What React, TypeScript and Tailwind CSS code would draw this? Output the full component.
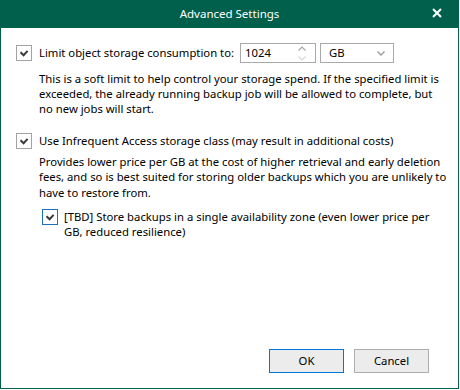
import React from 'react';

const font = { fontFamily: '"Noto Sans", "Open Sans", sans-serif' };

function Check({ focused }: { focused?: boolean }) {
    return (
        <div
            className={`flex h-[16px] w-[16px] shrink-0 items-center justify-center border bg-white ${
                focused ? 'border-[#1c6fb8]' : 'border-[#a3a3a3]'
            }`}
        >
            <svg width="10" height="8" viewBox="0 0 10 8">
                <path d="M1.5 3.2 L4.6 6.2 L8.6 1.8" fill="none" stroke="#3a3a3a" strokeWidth="2" />
            </svg>
        </div>
    );
}

export default function App() {
    return (
        <div className="h-[390px] w-[460px] bg-white text-[11.3px] text-black" style={font}>
            <div className="flex h-[389px] w-[459px] flex-col bg-[#00604c] px-px pb-px">
                {/* Title bar */}
                <div className="relative flex h-[28px] shrink-0 items-center justify-center text-[11.5px] text-white">
                    <span>Advanced Settings</span>
                    <svg className="absolute left-[431px] top-[8px]" width="10" height="10" viewBox="0 0 10 10">
                        <path d="M1 1 L9 9 M9 1 L1 9" stroke="#ffffff" strokeWidth="2" />
                    </svg>
                </div>

                {/* Body */}
                <div className="flex flex-1 flex-col bg-white px-[15px] pt-[15px]">
                    <div className="flex h-[20px] items-center">
                        <Check />
                        <span className="ml-[7px] whitespace-nowrap">Limit object storage consumption to:</span>
                        <div className="ml-[6px] flex h-[20px] w-[76px] border border-[#a9a9a9]">
                            <span className="flex-1 pl-[4px] leading-[18px]">1024</span>
                            <div className="flex w-[26px] flex-col items-center justify-center gap-[5px]">
                                <svg width="8" height="5" viewBox="0 0 8 5">
                                    <path d="M0.5 4.5 L4 1 L7.5 4.5" fill="none" stroke="#a6a6a6" strokeWidth="1.2" />
                                </svg>
                                <svg width="8" height="5" viewBox="0 0 8 5">
                                    <path d="M0.5 0.5 L4 4 L7.5 0.5" fill="none" stroke="#d6d6d6" strokeWidth="1.2" />
                                </svg>
                            </div>
                        </div>
                        <div className="ml-[4px] flex h-[20px] w-[74px] items-center justify-between border border-[#a9a9a9] pl-[8px] pr-[8px]">
                            <span>GB</span>
                            <svg width="8" height="5" viewBox="0 0 8 5">
                                <path d="M0.5 0.5 L4 4 L7.5 0.5" fill="none" stroke="#9a9a9a" strokeWidth="1.4" />
                            </svg>
                        </div>
                    </div>

                    <p className="mt-[8px] whitespace-nowrap pl-[23px] leading-[15px]">
                        This is a soft limit to help control your storage spend. If the specified limit is
                        <br />
                        exceeded, the already running backup job will be allowed to complete, but
                        <br />
                        no new jobs will start.
                    </p>

                    <div className="mt-[17px] flex items-center">
                        <Check />
                        <span className="ml-[7px] whitespace-nowrap">Use Infrequent Access storage class (may result in additional costs)</span>
                    </div>

                    <p className="mt-[4px] whitespace-nowrap pl-[23px] leading-[15.5px]">
                        Provides lower price per GB at the cost of higher retrieval and early deletion
                        <br />
                        fees, and so is best suited for storing older backups which you are unlikely to
                        <br />
                        have to restore from.
                    </p>

                    <div className="mt-[9px] flex items-start pl-[26px]">
                        <Check focused />
                        <p className="ml-[6px] whitespace-nowrap leading-[15px]">
                            [TBD] Store backups in a single availability zone (even lower price per
                            <br />
                            GB, reduced resilience)
                        </p>
                    </div>

                    {/* Buttons */}
                    <div className="mt-auto flex justify-end gap-[10px] pb-[15px] pr-[14px]">
                        <button className="h-[24px] w-[75px] border border-[#0078d7] bg-[#ececec] text-[11.3px]">OK</button>
                        <button className="h-[24px] w-[75px] border border-[#adadad] bg-[#ececec] text-[11.3px]">Cancel</button>
                    </div>
                </div>
            </div>
        </div>
    );
}
